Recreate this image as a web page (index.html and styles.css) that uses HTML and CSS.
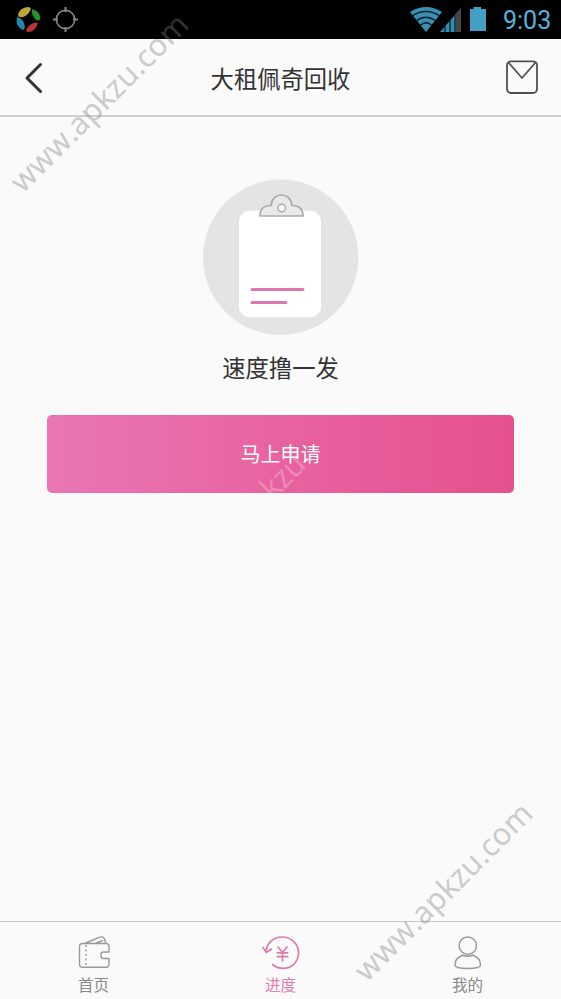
FILE: index.html
```html
<!DOCTYPE html>
<html lang="zh-CN">
<head>
<meta charset="utf-8">
<title>大租佩奇回收</title>
<link rel="stylesheet" href="styles.css">
</head>
<body>
<div class="screen">
  <div class="status">
    <svg class="notices" width="90" height="39" viewBox="0 0 90 39">
      <path d="M18 14.500Q20 7 29 7Q32 8 30 11Q26 18 20 17Q18 17 18 14.500Z" fill="#bda43c"/>
      <path d="M32 9Q40 11 40.500 19Q38 22 35 19Q31 14 32 9Z" fill="#268f2c"/>
      <path d="M38 23Q35 32 28 32Q25 31 27 28Q32 22 38 23Z" fill="#b9353a"/>
      <path d="M17 17Q22 18 24 23Q26 29 23 30Q15 27 17 17Z" fill="#2586ae"/>
      <circle cx="65.500" cy="19.500" r="9.200" fill="none" stroke="#858585" stroke-width="1.700"/>
      <path d="M65.500 7v5M65.500 27v5M53 19.500h5M73 19.500h5" stroke="#858585" stroke-width="2"/>
    </svg>
    <svg class="signals" width="85" height="39" viewBox="0 0 85 39">
      <path d="M6 12Q22 2 38 12L22 32Z" fill="#3b8fb4"/>
      <path d="M8 16Q22 7 36 16M12 21Q22 13.500 32 21M16 25.500Q22 20 28 25.500" fill="none" stroke="#0b2029" stroke-width="1.300"/>
      <path d="M36 32L57 8V32Z" fill="#358bad"/>
      <path d="M52 14L57 8V32H52Z" fill="#454545"/>
      <path d="M41 25v7M46 20v12M51 15v17" stroke="#0b2029" stroke-width="1.300"/>
      <path d="M66 9H69.500V7H77V9H82V31H66Z" fill="#439fc5"/>
    </svg>
    <span class="clock">9:03</span>
  </div>
  <header class="bar">
    <svg width="56" height="76" viewBox="0 0 56 76"><path d="M40.500 25.500L27 39L40.500 52.500" fill="none" stroke="#333" stroke-width="3" stroke-linecap="round" stroke-linejoin="round"/></svg>
    <h1>大租佩奇回收</h1>
    <svg width="56" height="76" viewBox="0 0 56 76"><g fill="none" stroke="#505050" stroke-width="1.800" stroke-linejoin="round"><rect x="2" y="22.300" width="30" height="31.700" rx="4"/><path d="M3.500 23.500L17 39L30.500 23.500"/></g></svg>
  </header>
  <main>
    <svg class="art" width="156" height="156" viewBox="0 0 156 156">
      <circle cx="77.700" cy="78.300" r="77.700" fill="#e4e4e4"/>
      <rect x="36" y="31.500" width="82" height="107" rx="11" fill="#fff"/>
      <path d="M57 37C57 29.500 61 26.500 68 26.500C69 12.500 88 12.500 89 26.500C96 26.500 100 29.500 100 37Z" fill="#e9e9e9" stroke="#aaa" stroke-width="1.700"/>
      <circle cx="78.700" cy="29" r="3.800" fill="#fff" stroke="#aaa" stroke-width="1.500"/>
      <path d="M49 110.500H100M49 123.500H83" stroke="#dc78ad" stroke-width="3" stroke-linecap="round"/>
    </svg>
    <p class="message">速度撸一发</p>
    <button class="apply">马上申请
      <svg class="button-mark" width="467" height="78" viewBox="47 415 467 78"><text x="273" y="501" textLength="49" transform="rotate(-45 273 501)">kzu</text></svg>
    </button>
  </main>
  <nav>
    <a class="tab">
      <svg width="40" height="40" viewBox="0 0 40 40"><g fill="none" stroke="#999" stroke-width="1.400" stroke-linejoin="round"><path d="M35 20H29.500Q27 20 27 22.500V24Q27 26.500 29.500 26.500H35V32Q35 35.300 32 35.300H8.500Q5.500 35.300 5.500 32V14.500Q5.500 11.500 8.500 11.500H32Q35 11.500 35 14.500ZM10.500 11.500L26 5.200Q29.500 4 30.500 7L32 11.500M21 11.500L29 8.500"/><path d="M12 13V35" stroke-dasharray="2 2.500"/></g></svg>
      <span>首页</span>
    </a>
    <a class="tab active">
      <svg width="40" height="40" viewBox="0 0 40 40"><g fill="none" stroke="#dc7cae" stroke-width="1.700" stroke-linecap="round" stroke-linejoin="round"><path d="M5 20C5.500 11 12.500 5 21 5C30.500 5 37.500 12 37.500 21C37.500 30 30.500 36.300 22 36.300C17.500 36.300 14 34.700 11.500 32.500M2 15.500L5.300 20.500L10.500 17"/><path d="M17 15L21.500 20.500L26 15M21.500 20.500V29M16.300 20.800H26.700M16.300 24.700H26.700"/></g></svg>
      <span>进度</span>
    </a>
    <a class="tab">
      <svg width="40" height="40" viewBox="0 0 40 40"><g fill="none" stroke="#999" stroke-width="1.500" stroke-linejoin="round"><circle cx="19.800" cy="13.600" r="8.700"/><path d="M14.500 23.300C10 25 7 28.500 7 33C7 35.300 12.500 36.500 19.800 36.500C27.100 36.500 32.500 35.300 32.500 33C32.500 28.500 29.500 25 25 23.300Q19.800 25 14.500 23.300Z"/></g></svg>
      <span>我的</span>
    </a>
  </nav>
  <svg class="watermarks" width="561" height="999" viewBox="0 0 561 999">
    <text x="23" y="194" textLength="237" transform="rotate(-45 23 194)">www.apkzu.com</text>
    <text x="367" y="983" textLength="237" transform="rotate(-45 367 983)">www.apkzu.com</text>
  </svg>
</div>
</body>
</html>
```

FILE: styles.css
```css
* { box-sizing: border-box; }
body { margin: 0; font-family: "Noto Sans CJK SC", sans-serif; color: #333; }
svg { display: block; flex: none; }
.screen { position: relative; width: 561px; height: 999px; display: flex; flex-direction: column; overflow: hidden; background: #fafafa; }
.status { height: 39px; flex: none; display: flex; align-items: center; background: #000; padding-right: 10px; }
.signals { margin-left: auto; margin-right: 14px; }
.clock { font: 25px/39px Roboto, sans-serif; color: #55b4dc; width: 48px; margin-top: 2px; white-space: nowrap; }
.bar { height: 78px; flex: none; display: flex; justify-content: space-between; border-bottom: 2px solid #cfcfcf; }
h1 { margin: 0; font-size: 23.300px; line-height: 78px; font-weight: 400; }
main { flex: 1; display: flex; flex-direction: column; align-items: center; padding-top: 62px; }
.message { margin: 15px 0 0; font-size: 23.300px; line-height: 34px; }
.apply { position: relative; width: 467px; height: 78px; margin-top: 30.500px; padding: 0; border: 0; border-radius: 5px; overflow: hidden; background: linear-gradient(90deg, #e976b2, #e5508e); color: #fff; font: 20px/78px "Noto Sans CJK SC", sans-serif; }
.button-mark { position: absolute; inset: 0; }
.button-mark text { font: 31px "Open Sans", sans-serif; fill: rgba(255, 255, 255, .25); }
nav { height: 78px; flex: none; display: flex; border-top: 1px solid #c8c8c8; }
.tab { flex: 1; display: flex; flex-direction: column; align-items: center; padding-top: 10px; font-size: 15.500px; line-height: 24px; color: #888; }
.active { color: #e57bb1; }
.watermarks { position: absolute; inset: 0; pointer-events: none; }
.watermarks text { font: 30.500px "Open Sans", sans-serif; fill: rgba(128, 128, 128, .4); stroke: rgba(128, 128, 128, .15); stroke-width: .5px; }
```
